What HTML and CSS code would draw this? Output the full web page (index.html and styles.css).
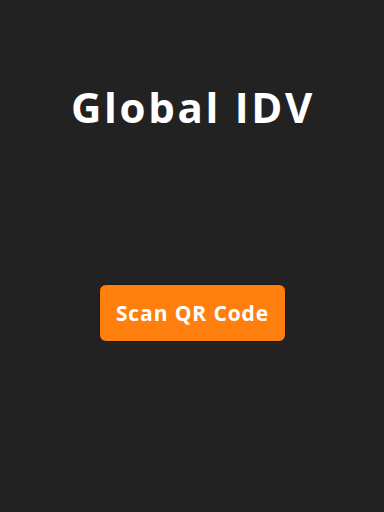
FILE: index.html
```html
<!DOCTYPE html>
<html>
<head>
<meta charset="utf-8">
<link rel="stylesheet" href="styles.css">
</head>
<body>
<main class="screen">
  <h1 class="title">Global IDV</h1>
  <button class="scan-btn">Scan QR Code</button>
</main>
</body>
</html>
```
FILE: styles.css
```css
html, body {
  margin: 0;
  padding: 0;
  background: #222222;
}
.screen {
  width: 384px;
  height: 512px;
  display: flex;
  flex-direction: column;
  align-items: center;
  font-family: "Open Sans", Lato, sans-serif;
}
.title {
  margin: 79px 0 0;
  padding-left: 2px;
  color: #ffffff;
  font-size: 42px;
  font-weight: 700;
  line-height: 56px;
  letter-spacing: 2.7px;
}
.scan-btn {
  margin-top: 149px;
  width: 187px;
  height: 58px;
  border: 1px solid #1a1a1a;
  border-radius: 7px;
  background: #ff7f0e;
  color: #ffffff;
  font-family: "Open Sans", Lato, sans-serif;
  font-size: 21px;
  font-weight: 700;
  letter-spacing: 0.9px;
  padding: 0 0 0 1px;
}
```
